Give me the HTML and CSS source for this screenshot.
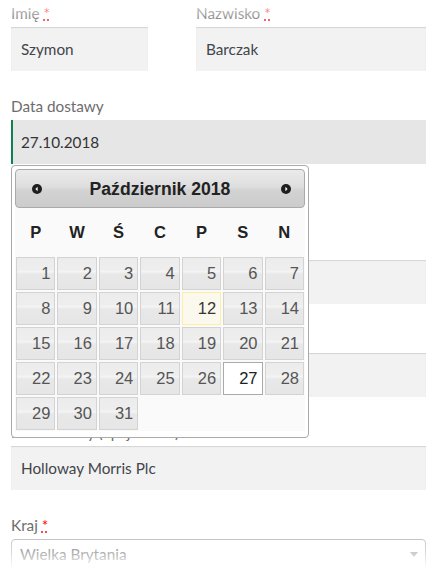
FILE: index.html
```html
<!DOCTYPE html>
<html lang="pl">
<head>
<meta charset="utf-8">
<title>Zamówienie</title>
<link rel="stylesheet" href="styles.css">
</head>
<body>
<form class="checkout">
  <div class="pair">
    <p class="field">
      <label class="field-label">Imię&nbsp;<abbr class="req" title="wymagane">*</abbr></label>
      <input class="input" type="text" value="Szymon">
    </p>
    <p class="field">
      <label class="field-label">Nazwisko&nbsp;<abbr class="req" title="wymagane">*</abbr></label>
      <input class="input" type="text" value="Barczak">
    </p>
  </div>

  <div class="field field-date">
    <label class="field-label">Data dostawy</label>
    <div class="input-wrap">
      <input class="input is-focused" type="text" value="27.10.2018">
      <div class="datepicker">
        <div class="dp-header">
          <span class="dp-nav dp-prev" title="Poprzedni">
            <svg width="10" height="10" viewBox="0 0 10 10"><circle cx="5" cy="5" r="5" fill="#1e1e1e"/><polygon points="3.4,5 5.6,2.8 5.6,7.2" fill="#fff"/></svg>
          </span>
          <span class="dp-title">Październik 2018</span>
          <span class="dp-nav dp-next" title="Następny">
            <svg width="10" height="10" viewBox="0 0 10 10"><circle cx="5" cy="5" r="5" fill="#1e1e1e"/><polygon points="6.6,5 4.4,2.8 4.4,7.2" fill="#fff"/></svg>
          </span>
        </div>
        <table class="dp-table">
          <thead>
            <tr><th>P</th><th>W</th><th>Ś</th><th>C</th><th>P</th><th>S</th><th>N</th></tr>
          </thead>
          <tbody>
            <tr><td><span class="day">1</span></td><td><span class="day">2</span></td><td><span class="day">3</span></td><td><span class="day">4</span></td><td><span class="day">5</span></td><td><span class="day">6</span></td><td><span class="day">7</span></td></tr>
            <tr><td><span class="day">8</span></td><td><span class="day">9</span></td><td><span class="day">10</span></td><td><span class="day">11</span></td><td><span class="day today">12</span></td><td><span class="day">13</span></td><td><span class="day">14</span></td></tr>
            <tr><td><span class="day">15</span></td><td><span class="day">16</span></td><td><span class="day">17</span></td><td><span class="day">18</span></td><td><span class="day">19</span></td><td><span class="day">20</span></td><td><span class="day">21</span></td></tr>
            <tr><td><span class="day">22</span></td><td><span class="day">23</span></td><td><span class="day">24</span></td><td><span class="day">25</span></td><td><span class="day">26</span></td><td><span class="day active">27</span></td><td><span class="day">28</span></td></tr>
            <tr><td><span class="day">29</span></td><td><span class="day">30</span></td><td><span class="day">31</span></td><td></td><td></td><td></td><td></td></tr>
          </tbody>
        </table>
      </div>
    </div>
  </div>

  <p class="field">
    <span class="field-label field-label--hidden"></span>
    <input class="input" type="text" value="" aria-label="Godzina dostawy">
  </p>

  <p class="field">
    <span class="field-label field-label--hidden"></span>
    <input class="input" type="text" value="" aria-label="Uwagi dla kuriera">
  </p>

  <p class="field">
    <label class="field-label">Nazwa firmy (opcjonalne)</label>
    <input class="input" type="text" value="Holloway Morris Plc">
  </p>

  <div class="field">
    <label class="field-label">Kraj&nbsp;<abbr class="req" title="wymagane">*</abbr></label>
    <span class="select" role="combobox">
      <span class="select-value">Wielka Brytania</span>
      <span class="select-arrow"></span>
    </span>
  </div>
</form>
<div class="fade fade-top"></div>
<div class="fade fade-bottom"></div>
</body>
</html>
```

FILE: styles.css
```css
* { box-sizing: border-box; }

html, body {
  margin: 0;
  padding: 0;
  background: #fff;
  overflow: hidden;
}

body {
  width: 436px;
  height: 570px;
  font-family: Lato, "Open Sans", sans-serif;
  font-size: 15.3px;
  color: #6d6d6d;
}

.checkout {
  padding: 1px 10px 0 11px;
}

.pair {
  display: grid;
  grid-template-columns: 137px 1fr;
  column-gap: 48px;
}

.field {
  margin: 0 0 23px;
}

.field-date {
  margin-bottom: 70px;
}

.field-label {
  display: block;
  line-height: 25px;
  min-height: 25px;
  margin-bottom: 1px;
  color: #6d6d6d;
}

.req {
  color: #ff0000;
  text-decoration: underline dotted;
  border: 0;
  cursor: help;
}

.input {
  display: block;
  width: 100%;
  height: 44px;
  margin: 0;
  border: 0;
  border-radius: 0;
  padding: 0 10px;
  background: #f2f2f2;
  box-shadow: inset 0 1px 1px rgba(0, 0, 0, .125);
  font: inherit;
  color: #43454b;
  outline: none;
}

.input.is-focused {
  background: #e6e6e6;
  box-shadow: inset 2px 0 0 #0f834d;
  color: #333;
}

.input-wrap {
  position: relative;
}

/* datepicker */
.datepicker {
  position: absolute;
  left: 0;
  top: calc(100% + 1px);
  z-index: 10;
  width: 298px;
  height: 273px;
  padding: 3px;
  border: 1px solid #aaa;
  border-radius: 4px;
  background: #fff;
  font-family: "Liberation Sans", Arial, sans-serif;
  color: #222;
}

.dp-header {
  display: grid;
  grid-template-columns: 40px 1fr 40px;
  align-items: center;
  height: 39px;
  border: 1px solid #aaa;
  border-radius: 4px;
  background: linear-gradient(to bottom, #ebebeb 0%, #dedede 45%, #d3d3d3 55%, #cbcbcb 100%);
}

.dp-nav {
  display: flex;
  width: 10px;
  height: 10px;
}

.dp-prev { justify-self: start; margin-left: 16px; }
.dp-next { justify-self: end; margin-right: 13px; }

.dp-title {
  text-align: center;
  font-weight: bold;
  font-size: 17.6px;
  color: #222;
  line-height: 20px;
}

.dp-table {
  width: 290px;
  table-layout: fixed;
  border-collapse: collapse;
  font-size: 16.5px;
  background: #fafafa;
}

.dp-table th {
  height: 48px;
  padding: 0;
  font-weight: bold;
  color: #222;
  text-align: center;
}

.dp-table td {
  height: 35px;
  padding: 1px;
}

.day {
  display: block;
  height: 33px;
  border: 1px solid #d3d3d3;
  padding-right: 4px;
  line-height: 31px;
  text-align: right;
  color: #555;
  background: linear-gradient(to bottom, #ececec 0%, #eeeeee 38%, #f4f4f4 44%, #e8e8e8 52%, #e6e6e6 100%);
}

.day.today {
  border-color: #fcefa1;
  background: #fbf9ee;
  color: #363636;
}

.day.active {
  border-color: #aaa;
  background: #fff;
  color: #212121;
}

/* select */
.select {
  position: relative;
  display: block;
  height: 36px;
  margin-top: 1px;
  padding-left: 8px;
  border: 1px solid #aaa;
  border-radius: 4px;
  background: #fff;
  color: #444;
  line-height: 28px;
}

.select-arrow {
  position: absolute;
  top: 1px;
  right: 1px;
  width: 20px;
  height: 26px;
}

.select-arrow::after {
  content: "";
  position: absolute;
  left: 50%;
  top: 50%;
  margin-left: -4px;
  margin-top: -2px;
  border-style: solid;
  border-width: 5px 4px 0;
  border-color: #888 transparent transparent;
}

/* screen edge fades */
.fade {
  position: fixed;
  left: 0;
  right: 0;
  pointer-events: none;
  z-index: 20;
}

.fade-top {
  top: 0;
  height: 26px;
  background: linear-gradient(to bottom, rgba(255, 255, 255, .85), rgba(255, 255, 255, 0));
}

.fade-bottom {
  bottom: 0;
  height: 40px;
  background: linear-gradient(to bottom, rgba(255, 255, 255, 0) 0%, rgba(255, 255, 255, .4) 30%, rgba(255, 255, 255, .6) 60%, rgba(255, 255, 255, .95) 92%, #fff 100%);
}
```
